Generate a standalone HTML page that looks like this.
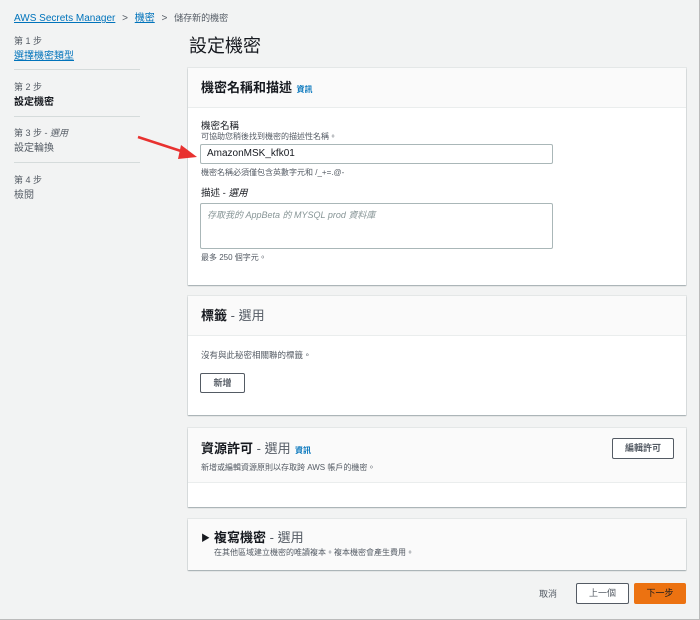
<!DOCTYPE html><html><head><meta charset="utf-8"><style>
*{box-sizing:border-box;margin:0;padding:0}
body{width:700px;height:620px;background:#f2f3f3;font-family:"Liberation Sans","Noto Sans CJK TC",sans-serif;color:#16191f;position:relative;overflow:hidden;border-right:1px solid #bbb;border-bottom:1px solid #bbb}
.a{position:absolute}
.s{font-size:9px;color:#545b64}
.l{font-size:10px}
.lk{color:#0073bb;text-decoration:underline}
.hr{position:absolute;left:14px;width:126px;border-top:1px solid #d5dbdb}
.card{position:absolute;left:188px;width:498px;background:#fff;box-shadow:0 1px 1px rgba(0,28,36,.3),0 0 0 1px #e4e7e7}
.hd{background:#fafafa;border-bottom:1px solid #eaeded}
.info{color:#0073bb;font-size:8px;font-weight:bold}
.inp{position:absolute;border:1px solid #aab7b8;border-radius:2px;background:#fff}
.btn{position:absolute;border:1px solid #545b64;border-radius:2px;background:#fff;font-size:9px;font-weight:bold;color:#545b64;text-align:center}
.h2{font-size:13px;font-weight:bold}
.opt{font-weight:normal;color:#545b64}
</style></head><body>
<div class="a l" style="left:14px;top:9px"><span class="lk" style="color:#0073bb">AWS Secrets Manager</span> <span style="color:#545b64;margin:0 4px">&gt;</span> <span class="lk">機密</span> <span style="color:#545b64;margin:0 4px">&gt;</span> <span style="color:#545b64;font-size:9px">儲存新的機密</span></div>
<div class="a s" style="left:14px;top:34px">第 1 步</div>
<div class="a l lk" style="left:14px;top:47px">選擇機密類型</div>
<div class="hr" style="top:69px"></div>
<div class="a s" style="left:14px;top:80px">第 2 步</div>
<div class="a l" style="left:14px;top:93px;font-weight:bold">設定機密</div>
<div class="hr" style="top:116px"></div>
<div class="a s" style="left:14px;top:126px">第 3 步 - <i>選用</i></div>
<div class="a l" style="left:14px;top:139px;color:#545b64">設定輪換</div>
<div class="hr" style="top:162px"></div>
<div class="a s" style="left:14px;top:173px">第 4 步</div>
<div class="a l" style="left:14px;top:186px;color:#545b64">檢閱</div>
<div class="a" style="left:189px;top:32px;font-size:18px">設定機密</div>

<div class="card" style="top:68px;height:217px">
<div class="hd" style="height:40px;padding:9px 13px"><span class="h2">機密名稱和描述</span> <span class="info">資訊</span></div>
<div class="a" style="left:13px;top:50px;font-size:9.5px">機密名稱</div>
<div class="a s" style="left:13px;top:63px;font-size:8px">可協助您稍後找到機密的描述性名稱。</div>
<div class="inp" style="left:12px;top:76px;width:353px;height:20px;padding:3px 6px;font-size:10px">AmazonMSK_kfk01</div>
<div class="a s" style="left:13px;top:99px;font-size:8px">機密名稱必須僅包含英數字元和 /_+=.@-</div>
<div class="a" style="left:13px;top:117px;font-size:9.5px">描述 - <i>選用</i></div>
<div class="inp" style="left:12px;top:135px;width:353px;height:46px;padding:4px 6px;font-size:9px;color:#879596;font-style:italic">存取我的 AppBeta 的 MYSQL prod 資料庫</div>
<div class="a s" style="left:13px;top:184px;font-size:8px">最多 250 個字元。</div>
</div>

<div class="card" style="top:296px;height:119px">
<div class="hd" style="height:40px;padding:9px 13px"><span class="h2">標籤</span><span class="h2 opt"> - 選用</span></div>
<div class="a s" style="left:13px;top:53px;font-size:8.5px">沒有與此秘密相關聯的標籤。</div>
<div class="btn" style="left:12px;top:77px;width:45px;height:20px;line-height:18px">新增</div>
</div>

<div class="card" style="top:428px;height:79px">
<div class="hd" style="height:55px;padding:10px 13px"><span class="h2">資源許可</span><span class="h2 opt"> - 選用</span> <span class="info">資訊</span>
<div class="s" style="font-size:8px;margin-top:4px">新增或編輯資源原則以存取跨 AWS 帳戶的機密。</div></div>
<div class="btn" style="left:424px;top:10px;width:62px;height:21px;line-height:19px">編輯許可</div>
</div>

<div class="card" style="top:519px;height:51px;background:#fafafa">
<div class="a" style="left:13px;top:12px;font-size:9px">▶</div>
<div class="a" style="left:26px;top:8px"><span class="h2">複寫機密</span><span class="h2 opt"> - 選用</span></div>
<div class="a s" style="left:26px;top:28px;font-size:8px">在其他區域建立機密的唯讀複本。複本機密會產生費用。</div>
</div>

<div class="a" style="left:539px;top:587px;font-size:9px;color:#545b64">取消</div>
<div class="btn" style="left:576px;top:583px;width:53px;height:21px;line-height:19px;font-weight:normal">上一個</div>
<div class="btn" style="left:634px;top:583px;width:52px;height:21px;line-height:19px;background:#ec7211;border-color:#ec7211;color:#16191f;font-weight:normal">下一步</div>

<svg class="a" style="left:135px;top:134px" width="65" height="30"><line x1="3" y1="3" x2="52" y2="19" stroke="#e8312f" stroke-width="2.5"/><polygon points="62,23 46,11 43,25" fill="#e8312f"/></svg>
</body></html>
